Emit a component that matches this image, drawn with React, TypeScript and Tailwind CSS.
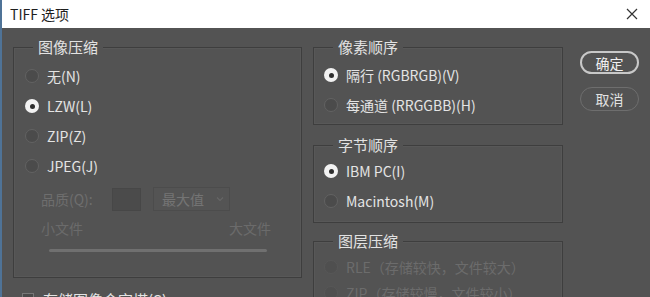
import React from "react";

const font = { fontFamily: '"Noto Sans CJK SC", "Noto Sans", sans-serif' };

const Radio = ({ checked = false, disabled = false, label }: { checked?: boolean; disabled?: boolean; label: string }) => (
  <div className="flex items-center h-full">
    <span
      className={
        checked
          ? "w-[14px] h-[14px] rounded-full bg-[#f2f2f2] flex items-center justify-center"
          : disabled
          ? "w-[14px] h-[14px] rounded-full bg-[#4f4f4f] border border-[#575757]"
          : "w-[14px] h-[14px] rounded-full bg-[#4b4b4b] border-[1.5px] border-[#626262]"
      }
    >
      {checked && <span className="w-[5px] h-[5px] rounded-full bg-[#2e2e2e]" />}
    </span>
    <span className={disabled ? "ml-[8px] text-[14px] text-[#6c6c6c]" : "ml-[8px] text-[14px] text-[#e4e4e4]"}>{label}</span>
  </div>
);

// group box: the title sits over the top border
const Group = ({ title, className, children }: { title: string; className: string; children: React.ReactNode }) => (
  <div className={"relative border border-[#3e3e3e] shadow-[inset_0_0_0_1px_#585858] " + className}>
    <span className="absolute left-[19px] top-[-10px] px-[5px] bg-[#535353] text-[15px] leading-[18px] text-[#e2e2e2]">{title}</span>
    {children}
  </div>
);

export default function App() {
  return (
    <div className="w-[650px] h-[297px] overflow-hidden bg-[#535353] border-l-2 border-[#4f7397] flex flex-col" style={font}>
      {/* title bar */}
      <div className="h-[28px] bg-white flex items-center justify-between pl-[8px] pr-[12px] shrink-0">
        <span className="text-[14px] text-[#1e1e1e]">TIFF 选项</span>
        <svg width="12" height="12" viewBox="0 0 12 12" className="text-[#333]">
          <path d="M1 1 L11 11 M11 1 L1 11" stroke="currentColor" strokeWidth="1.2" />
        </svg>
      </div>

      <div className="flex pl-[11px]">
        {/* left column */}
        <div className="flex flex-col">
          <Group title="图像压缩" className="w-[289px] h-[231px] mt-[19px] pl-[11px] pt-[13px]">
            <div className="flex flex-col">
              <div className="h-[30px]"><Radio label="无(N)" /></div>
              <div className="h-[30px]"><Radio checked label="LZW(L)" /></div>
              <div className="h-[30px]"><Radio label="ZIP(Z)" /></div>
              <div className="h-[30px]"><Radio label="JPEG(J)" /></div>
            </div>
            <div className="ml-[16px] mt-[6px] flex items-center h-[24px]">
              <span className="w-[71px] text-[14px] text-[#6e6e6e]">品质(Q):</span>
              <span className="w-[29px] h-[23px] bg-[#4b4b4b] border border-[#474747]" />
              <span className="ml-[12px] w-[77px] h-[24px] bg-[#545454] border border-[#4c4c4c] flex items-center justify-between pl-[8px] pr-[5px]">
                <span className="text-[14px] text-[#747474]">最大值</span>
                <svg width="8" height="6" viewBox="0 0 8 6">
                  <path d="M1 1.5 L4 4.5 L7 1.5" stroke="#666" strokeWidth="1.2" fill="none" />
                </svg>
              </span>
            </div>
            <div className="ml-[16px] mt-[9px] w-[230px] flex justify-between text-[14px] leading-[16px] text-[#6b6b6b]">
              <span>小文件</span>
              <span>大文件</span>
            </div>
            <div className="ml-[24px] mt-[13px] w-[218px] h-[3px] bg-[#707070] rounded-full" />
          </Group>
          <div className="mt-[14px] ml-[9px] flex items-start">
            <span className="w-[12px] h-[12px] border border-[#777] bg-[#4a4a4a] mt-[1px]" />
            <span className="ml-[9px] text-[15px] leading-[16px] text-[#e4e4e4]">存储图像金字塔(S)</span>
          </div>
        </div>

        {/* right column */}
        <div className="flex flex-col ml-[11px]">
          <Group title="像素顺序" className="w-[250px] h-[78px] mt-[19px] pl-[10px] pt-[12px]">
            <div className="flex flex-col">
              <div className="h-[30px]"><Radio checked label="隔行 (RGBRGB)(V)" /></div>
              <div className="h-[30px]"><Radio label="每通道 (RRGGBB)(H)" /></div>
            </div>
          </Group>
          <Group title="字节顺序" className="w-[250px] h-[78px] mt-[20px] pl-[10px] pt-[10px]">
            <div className="flex flex-col">
              <div className="h-[30px]"><Radio checked label="IBM PC(I)" /></div>
              <div className="h-[30px]"><Radio label="Macintosh(M)" /></div>
            </div>
          </Group>
          <Group title="图层压缩" className="w-[250px] h-[80px] mt-[18px] pl-[10px] pt-[12px]">
            <div className="flex flex-col">
              <div className="h-[26px]"><Radio disabled label="RLE（存储较快，文件较大）" /></div>
              <div className="h-[26px]"><Radio disabled label="ZIP（存储较慢，文件较小）" /></div>
            </div>
          </Group>
        </div>

        {/* buttons */}
        <div className="flex flex-col ml-[17px] mt-[23px] gap-[13px]">
          <button className="w-[59px] h-[23px] rounded-full border-2 border-[#c8c8c8] text-[14px] leading-none text-[#f0f0f0]">确定</button>
          <button className="w-[59px] h-[24px] rounded-full border border-[#6e6e6e] text-[14px] leading-none text-[#e2e2e2]">取消</button>
        </div>
      </div>
    </div>
  );
}
